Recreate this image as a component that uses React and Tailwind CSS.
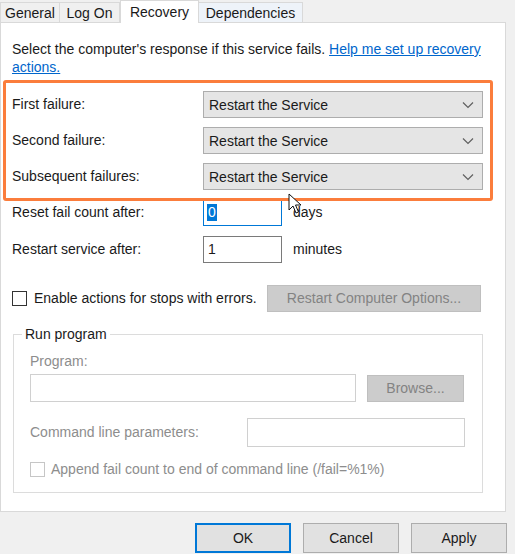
import React from 'react';

const Chevron = () => (
  <svg width="12" height="8" viewBox="0 0 12 8" className="shrink-0">
    <path d="M1 1.5 L6 6.5 L11 1.5" fill="none" stroke="#606060" strokeWidth="1.2" />
  </svg>
);

const Dropdown = ({ value }) => (
  <div className="w-[280px] h-[27px] bg-[#e5e5e5] border border-[#adadad] flex items-center justify-between pl-[5px] pr-[8px] pt-px">
    <span>{value}</span>
    <Chevron />
  </div>
);

const FailureRow = ({ label }) => (
  <div className="flex items-center h-[27px]">
    <span className="w-[191px]">{label}</span>
    <Dropdown value="Restart the Service" />
  </div>
);

const Cursor = () => (
  <svg width="14" height="22" viewBox="0 0 14 22" className="absolute left-[288px] top-[193px]">
    <path d="M1 1 L1 17 L5 13 L8 20 L10.5 19 L7.5 12 L13 12 Z" fill="#fff" stroke="#111" strokeWidth="1" strokeLinejoin="round" />
  </svg>
);

const App = () => {
  return (
    <div
      className="relative w-[515px] h-[554px] overflow-hidden bg-[#f0f0f0] text-[14px] text-[#1a1a1a]"
      style={{ fontFamily: '"Liberation Sans", Arial, sans-serif' }}
    >
      {/* Tabs */}
      <div className="flex items-end h-[23px]">
        <div className="h-[21px] w-[60px] border border-[#d9d9d9] border-b-0 flex items-center justify-center">General</div>
        <div className="h-[21px] w-[60px] border border-[#d9d9d9] border-b-0 border-l-0 flex items-center justify-center">Log On</div>
        <div className="relative z-10 h-[23px] w-[79px] bg-white border border-[#d9d9d9] border-b-0 flex items-start justify-center pt-[1px]">Recovery</div>
        <div className="h-[21px] w-[104px] bg-[#eef3f9] border border-[#d9d9d9] border-b-0 border-l-0 flex items-center justify-center">Dependencies</div>
      </div>

      {/* Page */}
      <div className="relative w-[506px] h-[490px] -mt-px bg-white border border-[#d9d9d9] pl-[11px]">
        <div className="pt-[17px] leading-[18px]">
          <div>
            Select the computer's response if this service fails.{' '}
            <span className="text-[#0066cc] underline">Help me set up recovery</span>
          </div>
          <div className="text-[#0066cc] underline">actions.</div>
        </div>

        <div className="mt-[15px] flex flex-col gap-[9px]">
          <FailureRow label="First failure:" />
          <FailureRow label="Second failure:" />
          <FailureRow label="Subsequent failures:" />
        </div>

        <div className="mt-[9px] flex items-center h-[27px]">
          <span className="w-[191px]">Reset fail count after:</span>
          <div className="w-[79px] h-[27px] border border-[#0078d7] flex items-center pl-[3px]">
            <span className="bg-[#0078d7] text-white leading-[17px] px-px">0</span>
          </div>
          <span className="ml-[11px]">days</span>
        </div>

        <div className="mt-[10px] flex items-center h-[27px]">
          <span className="w-[191px]">Restart service after:</span>
          <div className="w-[79px] h-[27px] border border-[#7a7a7a] flex items-center pl-[4px]">1</div>
          <span className="ml-[11px]">minutes</span>
        </div>

        <div className="mt-[22px] flex items-center h-[27px]">
          <div className="w-[15px] h-[15px] border border-[#333333] bg-white" />
          <span className="ml-[7px] w-[233px]">Enable actions for stops with errors.</span>
          <div className="w-[214px] h-[27px] bg-[#cccccc] border border-[#bfbfbf] flex items-center justify-center text-[#838383]">
            Restart Computer Options...
          </div>
        </div>

        {/* Run program group */}
        <div className="relative mt-[22px] ml-[1px] w-[470px] h-[159px] border border-[#dcdcdc] pl-[16px]">
          <span className="absolute -top-[10px] left-[8px] bg-white px-[3px] leading-[18px]">Run program</span>
          <div className="mt-[17px] leading-[18px] text-[#8d8d8d]">Program:</div>
          <div className="mt-[4px] flex items-center">
            <div className="w-[326px] h-[28px] border border-[#d0d0d0]" />
            <div className="ml-[11px] w-[97px] h-[27px] bg-[#cccccc] border border-[#bfbfbf] flex items-center justify-center text-[#838383]">
              Browse...
            </div>
          </div>
          <div className="mt-[16px] flex items-center">
            <span className="w-[217px] text-[#8d8d8d]">Command line parameters:</span>
            <div className="w-[218px] h-[29px] border border-[#d0d0d0]" />
          </div>
          <div className="mt-[12px] flex items-center">
            <div className="w-[15px] h-[15px] border border-[#c6c6c6] bg-white" />
            <span className="ml-[6px] text-[#8d8d8d]">Append fail count to end of command line (/fail=%1%)</span>
          </div>
        </div>

        {/* Highlight annotation */}
        <div className="absolute left-[2px] top-[57px] w-[490px] h-[121px] border-[3px] border-[#fb7d3c] rounded-[3px] pointer-events-none" />
      </div>

      {/* Dialog buttons */}
      <div className="flex justify-end gap-[12px] pr-[8px] mt-[11px]">
        <div className="w-[96px] h-[30px] bg-[#e1e1e1] border-2 border-[#0078d7] flex items-center justify-center">OK</div>
        <div className="w-[96px] h-[30px] bg-[#e1e1e1] border border-[#adadad] flex items-center justify-center">Cancel</div>
        <div className="w-[96px] h-[30px] bg-[#e1e1e1] border border-[#adadad] flex items-center justify-center">Apply</div>
      </div>

      <Cursor />
    </div>
  );
};

export default App;
